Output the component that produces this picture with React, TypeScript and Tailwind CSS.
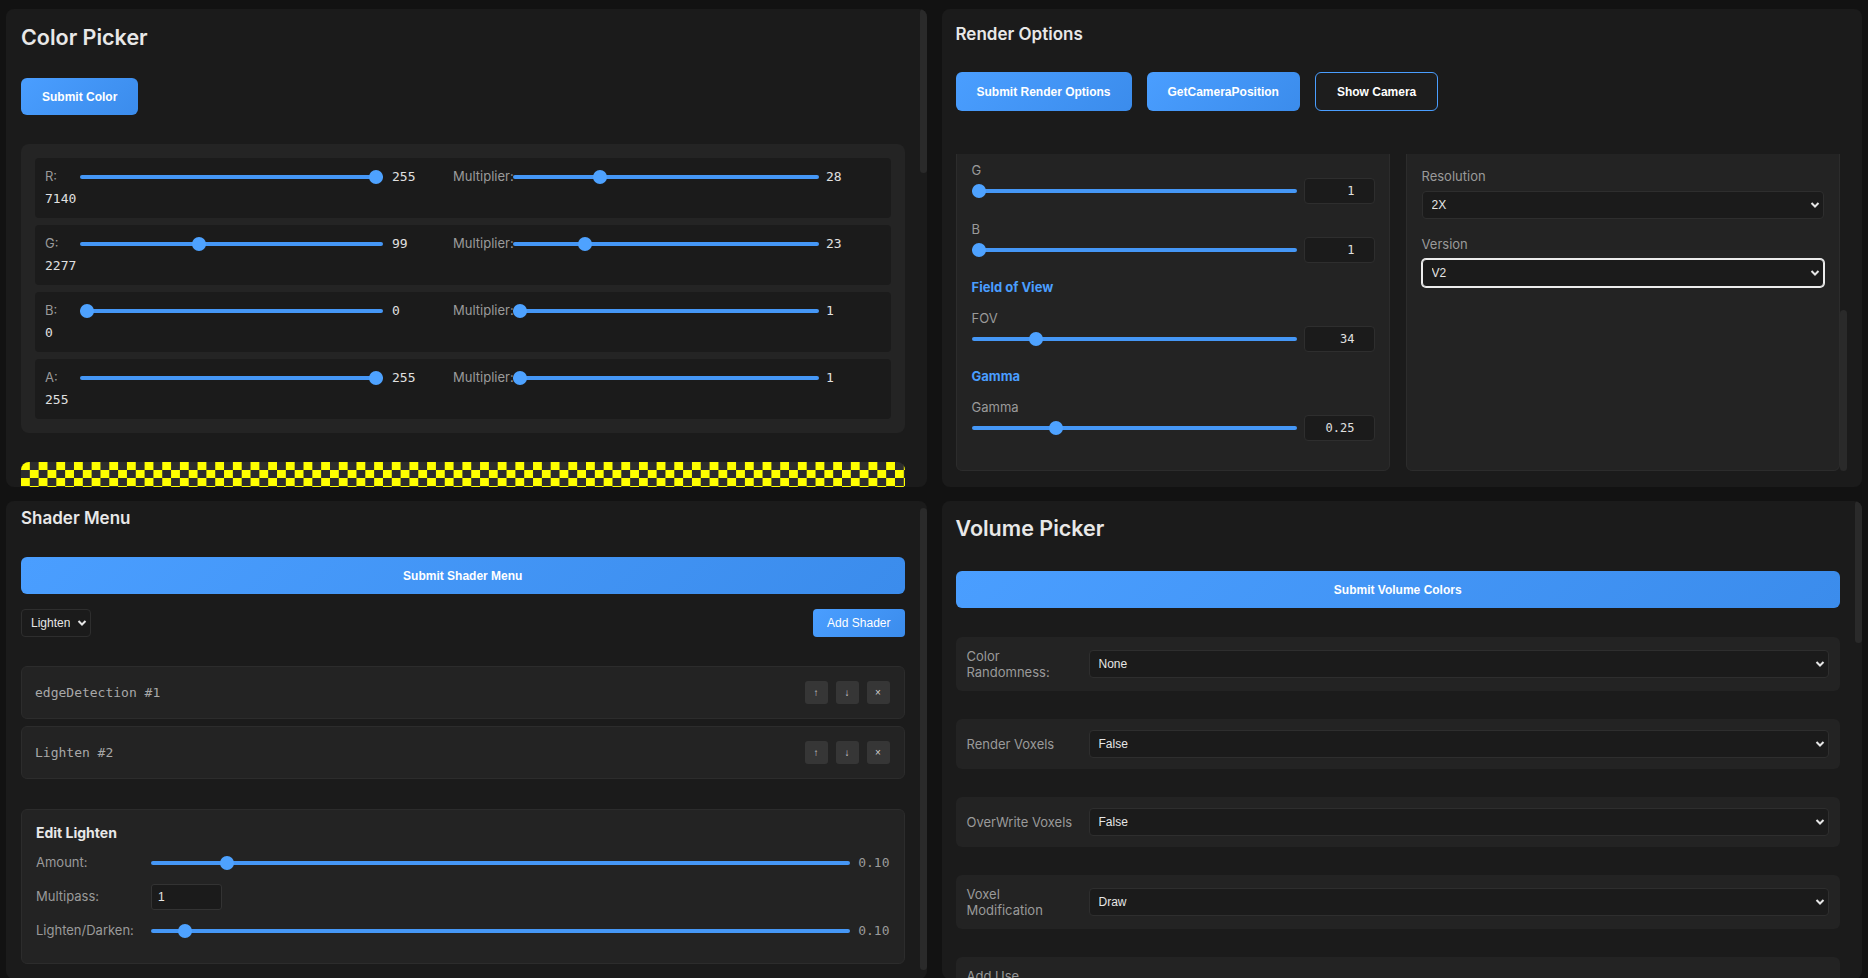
import React, { useLayoutEffect, useRef } from "react";

const NOSB = "[scrollbar-width:none] [&::-webkit-scrollbar]:hidden";

const BTN =
  "rounded-[6px] bg-[linear-gradient(135deg,#4a9eff,#3b8cec)] font-['Liberation_Sans',Arial,sans-serif] text-[12px] font-bold text-white";

function Slider({ frac, className }: { frac: number; className: string }) {
  return (
    <div className={`relative flex h-[14px] items-center ${className}`}>
      <div className="h-[4px] w-full rounded-full bg-[#4597f6]" />
      <div
        className="absolute top-0 h-[14px] w-[14px] rounded-full bg-[#4ea2ff]"
        style={{ left: `calc((100% - 14px) * ${frac})` }}
      />
    </div>
  );
}

function Chevron() {
  return (
    <svg
      className="pointer-events-none absolute right-[4px] top-1/2 -translate-y-1/2"
      width="10"
      height="7"
      viewBox="0 0 10 7"
    >
      <path d="M1.5 1.5 L5 5 L8.5 1.5" fill="none" stroke="#e6e6e6" strokeWidth="2" />
    </svg>
  );
}

function Select({
  value,
  focused = false,
  className = "",
}: {
  value: string;
  focused?: boolean;
  className?: string;
}) {
  return (
    <div className={`relative ${className}`}>
      <select
        defaultValue={value}
        className={`h-[28px] w-full appearance-none rounded-[4px] border bg-[#1b1b1b] pl-[9px] pr-[20px] font-['Liberation_Sans',Arial,sans-serif] text-[12px] text-[#e6e6e6] outline-none ${
          focused ? "border-[#ececec] ring-1 ring-[#ececec]" : "border-[#2e2e2e]"
        }`}
      >
        <option>{value}</option>
      </select>
      <Chevron />
    </div>
  );
}

/* Panel with a slim scroll thumb drawn over its right edge */
function Panel({
  children,
  thumb,
  inner,
  scrollRef,
}: {
  children: React.ReactNode;
  thumb: string;
  inner: string;
  scrollRef?: React.RefObject<HTMLDivElement | null>;
}) {
  return (
    <section className="relative overflow-hidden rounded-[8px] bg-[#1b1b1b]">
      <div ref={scrollRef} className={`h-full overflow-y-auto pr-[7px] ${NOSB}`}>
        <div className={inner}>{children}</div>
      </div>
      <div className={`absolute right-0 w-[7px] rounded-[4px] bg-[#2a2a2a] ${thumb}`} />
    </section>
  );
}

/* ---------------- Color Picker ---------------- */

const rgba = [
  { l: "R:", v: 255, m: 28, t: "7140" },
  { l: "G:", v: 99, m: 23, t: "2277" },
  { l: "B:", v: 0, m: 1, t: "0" },
  { l: "A:", v: 255, m: 1, t: "255" },
];

function ColorPicker() {
  return (
    <Panel thumb="top-0 h-[164px]" inner="px-[15px] pt-[15px]">
      <h2 className="text-[21.5px] font-semibold leading-[27px] text-[#e8e8e8]">Color Picker</h2>
      <button className={`${BTN} mt-[27px] h-[37px] px-[21px]`}>Submit Color</button>
      <div className="mt-[29px] flex flex-col gap-[7px] rounded-[8px] bg-[#242424] p-[14px]">
        {rgba.map((c) => (
          <div key={c.l} className="h-[60px] rounded-[4px] bg-[#1b1b1b] px-[10px] pt-[10px]">
            <div className="flex h-[18px] items-center">
              <div className="flex w-[408px] items-center">
                <span className="w-[35px] text-[13px] text-[#9a9a9a]">{c.l}</span>
                <Slider frac={c.v / 255} className="w-[303px]" />
                <span className="ml-[9px] font-['DejaVu_Sans_Mono',monospace] text-[13px] text-[#e0e0e0]">
                  {c.v}
                </span>
              </div>
              <div className="flex items-center">
                <span className="w-[60px] text-[13px] text-[#9a9a9a]">Multiplier:</span>
                <Slider frac={(c.m - 1) / 99} className="w-[306px]" />
                <span className="ml-[7px] font-['DejaVu_Sans_Mono',monospace] text-[13px] text-[#e0e0e0]">
                  {c.m}
                </span>
              </div>
            </div>
            <div className="mt-[5px] font-['DejaVu_Sans_Mono',monospace] text-[13px] leading-[16px] text-[#e0e0e0]">
              {c.t}
            </div>
          </div>
        ))}
      </div>
      <div className="mt-[29px] h-[60px] rounded-[8px] bg-[conic-gradient(#2d2d2d_25%,#ffff00_0_50%,#2d2d2d_0_75%,#ffff00_0)] bg-[length:17.66px_16px]" />
    </Panel>
  );
}

/* ---------------- Render Options ---------------- */

function RHeading({ children }: { children: React.ReactNode }) {
  return (
    <div className="mt-[16px] mb-[16px] h-[16px] text-[13px] font-bold leading-[16px] text-[#4a9eff]">
      {children}
    </div>
  );
}

function RItem({ label, frac, value }: { label: string; frac: number; value: string }) {
  return (
    <div>
      <div className="h-[15px] text-[13px] leading-[15px] text-[#9a9a9a]">{label}</div>
      <div className="flex h-[26px] items-center">
        <Slider frac={frac} className="flex-1" />
        <input
          readOnly
          value={value}
          className="ml-[7px] h-[26px] w-[71px] rounded-[4px] border border-[#2e2e2e] bg-[#1b1b1b] pr-[19px] text-right font-['DejaVu_Sans_Mono',monospace] text-[12px] text-[#e0e0e0] outline-none"
        />
      </div>
    </div>
  );
}

function RSelect({ label, value, focused = false }: { label: string; value: string; focused?: boolean }) {
  return (
    <div>
      <div className="mb-[7px] h-[15px] text-[13px] leading-[15px] text-[#9a9a9a]">{label}</div>
      <Select value={value} focused={focused} />
    </div>
  );
}

function RenderOptions() {
  const ref = useRef<HTMLDivElement>(null);
  useLayoutEffect(() => {
    if (ref.current) ref.current.scrollTop = ref.current.scrollHeight;
  }, []);
  return (
    <section className="flex flex-col overflow-hidden rounded-[8px] bg-[#1b1b1b] pl-[14px] pr-[15px] pt-[15px] pb-[16px]">
      <h2 className="text-[17px] font-semibold leading-[21px] text-[#e8e8e8]">Render Options</h2>
      <div className="mt-[27px] flex gap-[15px]">
        <button className={`${BTN} h-[39px] px-[21px]`}>Submit Render Options</button>
        <button className={`${BTN} h-[39px] px-[21px]`}>GetCameraPosition</button>
        <button className="h-[39px] rounded-[6px] border border-[#4a9eff] bg-[#1d1d1d] px-[21px] font-['Liberation_Sans',Arial,sans-serif] text-[12px] font-bold text-white">
          Show Camera
        </button>
      </div>
      <div className="relative mt-[43px] min-h-0 flex-1">
        <div ref={ref} className={`h-full overflow-y-auto pr-[7px] ${NOSB}`}>
          <div className="flex items-stretch gap-[16px]">
            <div className="w-[434px] shrink-0 rounded-[6px] border border-[#2c2c2c] bg-[#232323] pl-[15px] pr-[14px] pt-[16px] pb-[29px]">
              <div aria-hidden className="h-[298px]" />
              <div className="flex flex-col gap-[18px]">
                <RItem label="G" frac={0} value="1" />
                <RItem label="B" frac={0} value="1" />
              </div>
              <RHeading>Field of View</RHeading>
              <RItem label="FOV" frac={33 / 179} value="34" />
              <RHeading>Gamma</RHeading>
              <RItem label="Gamma" frac={0.25} value="0.25" />
            </div>
            <div className="w-[434px] shrink-0 rounded-[6px] border border-[#2c2c2c] bg-[#232323] px-[15px] pt-[16px]">
              <div aria-hidden className="h-[304px]" />
              <div className="flex flex-col gap-[18px]">
                <RSelect label="Resolution" value="2X" />
                <RSelect label="Version" value="V2" focused />
              </div>
            </div>
          </div>
        </div>
        <div className="absolute right-0 bottom-0 h-[161px] w-[7px] rounded-[4px] bg-[#2a2a2a]" />
      </div>
    </section>
  );
}

/* ---------------- Shader Menu ---------------- */

function ShaderItem({ name }: { name: string }) {
  return (
    <div className="flex h-[53px] items-center justify-between rounded-[6px] border border-[#2c2c2c] bg-[#232323] pl-[13px] pr-[14px]">
      <span className="font-['DejaVu_Sans_Mono',monospace] text-[13px] text-[#a8a8a8]">{name}</span>
      <div className="flex gap-[8px]">
        {["↑", "↓", "×"].map((g) => (
          <button
            key={g}
            className="flex h-[23px] w-[23px] items-center justify-center rounded-[3px] bg-[#363636] font-['Liberation_Sans',Arial,sans-serif] text-[10px] text-[#d0d0d0]"
          >
            {g}
          </button>
        ))}
      </div>
    </div>
  );
}

function ShaderMenu() {
  const ref = useRef<HTMLDivElement>(null);
  useLayoutEffect(() => {
    if (ref.current) ref.current.scrollTop = 8;
  }, []);
  return (
    <Panel scrollRef={ref} thumb="top-[7px] h-[462px]" inner="px-[15px] pt-[15px] pb-[24px]">
      <h2 className="text-[17px] font-semibold leading-[21px] text-[#e8e8e8]">Shader Menu</h2>
      <button className={`${BTN} mt-[28px] h-[37px] w-full`}>Submit Shader Menu</button>
      <div className="mt-[15px] flex items-center justify-between">
        <Select value="Lighten" className="w-[70px]" />
        <button className="h-[28px] rounded-[4px] bg-[linear-gradient(135deg,#4a9eff,#3b8cec)] px-[14px] font-['Liberation_Sans',Arial,sans-serif] text-[12px] text-white">
          Add Shader
        </button>
      </div>
      <div className="mt-[29px] flex flex-col gap-[7px]">
        <ShaderItem name="edgeDetection #1" />
        <ShaderItem name="Lighten #2" />
      </div>
      <div className="mt-[30px] rounded-[6px] border border-[#2c2c2c] bg-[#232323] px-[14px] pt-[13px] pb-[19px]">
        <div className="text-[14px] font-bold leading-[20px] text-[#e8e8e8]">Edit Lighten</div>
        <div className="mt-[7px] flex flex-col gap-[8px]">
          <div className="flex h-[26px] items-center">
            <span className="w-[115px] text-[13px] text-[#9a9a9a]">Amount:</span>
            <Slider frac={0.1} className="flex-1" />
            <span className="ml-[8px] font-['DejaVu_Sans_Mono',monospace] text-[13px] text-[#9a9a9a]">0.10</span>
          </div>
          <div className="flex h-[26px] items-center">
            <span className="w-[115px] text-[13px] text-[#9a9a9a]">Multipass:</span>
            <input
              readOnly
              value="1"
              className="h-[26px] w-[71px] rounded-[3px] border border-[#333333] bg-[#1b1b1b] pl-[6px] font-['Liberation_Sans',Arial,sans-serif] text-[12px] text-[#e6e6e6] outline-none"
            />
          </div>
          <div className="flex h-[26px] items-center">
            <span className="w-[115px] text-[13px] text-[#9a9a9a]">Lighten/Darken:</span>
            <Slider frac={0.04} className="flex-1" />
            <span className="ml-[8px] font-['DejaVu_Sans_Mono',monospace] text-[13px] text-[#9a9a9a]">0.10</span>
          </div>
        </div>
      </div>
    </Panel>
  );
}

/* ---------------- Volume Picker ---------------- */

const volumeRows = [
  { l: "Color Randomness:", v: "None" },
  { l: "Render Voxels", v: "False" },
  { l: "OverWrite Voxels", v: "False" },
  { l: "Voxel Modification", v: "Draw" },
  { l: "Add Use Randomness Colors:", v: "False" },
];

function VolumePicker() {
  return (
    <Panel thumb="top-0 h-[142px]" inner="pl-[14px] pr-[15px] pt-[13px] pb-[15px]">
      <h2 className="text-[21.5px] font-semibold leading-[28px] text-[#e8e8e8]">Volume Picker</h2>
      <button className={`${BTN} mt-[29px] h-[37px] w-full`}>Submit Volume Colors</button>
      <div className="mt-[29px] flex flex-col gap-[28px]">
        {volumeRows.map((r) => (
          <div key={r.l} className="flex items-center gap-[10px] rounded-[6px] bg-[#232323] px-[11px] py-[11px]">
            <span className="w-[112px] shrink-0 text-[13px] leading-[16px] text-[#9a9a9a]">{r.l}</span>
            <Select value={r.v} className="flex-1" />
          </div>
        ))}
      </div>
    </Panel>
  );
}

export default function App() {
  return (
    <div className="h-screen overflow-hidden bg-[#121212] font-['Inter',sans-serif] text-[#e6e6e6]">
      <div className="grid grid-cols-2 grid-rows-[478px_478px] gap-x-[15px] gap-y-[14px] px-[6px] pt-[9px]">
        <ColorPicker />
        <RenderOptions />
        <ShaderMenu />
        <VolumePicker />
      </div>
    </div>
  );
}
